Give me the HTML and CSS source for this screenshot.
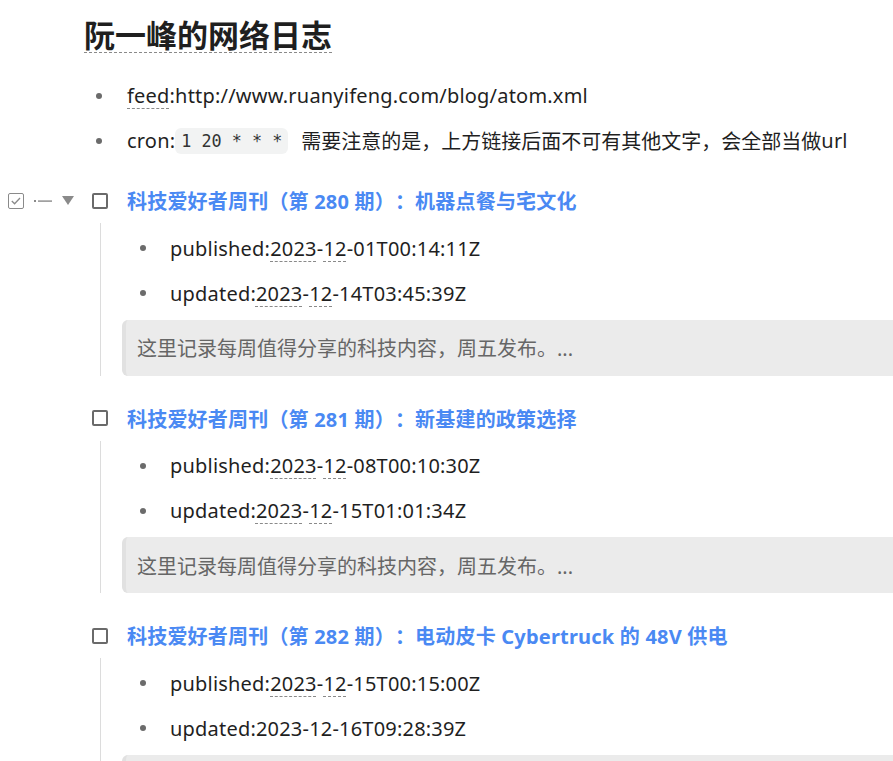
FILE: index.html
```html
<!DOCTYPE html>
<html lang="zh">
<head>
<meta charset="utf-8">
<title>阮一峰的网络日志</title>
<link rel="stylesheet" href="styles.css">
</head>
<body>
<div class="page">
  <h1 class="title"><span class="title-text">阮一峰的网络日志</span></h1>
  <ul class="list root">
    <li class="item"><span class="u">feed</span>:http://www.ruanyifeng.com/blog/atom.xml</li>
    <li class="item">cron:<code class="code">1 20 * * *</code><span class="zh">需要注意的是，上方链接后面不可有其他文字，会全部当做</span>url</li>
  </ul>

  <section class="entry">
    <div class="entry-head">
      <div class="gutter show">
        <svg class="g-check" width="16" height="16" viewBox="0 0 16 16"><rect x="0.5" y="0.5" width="15" height="15" rx="1.5" fill="none" stroke="#8a8a8a"/><path d="M3.8 8 L6.6 10.8 L12 5" fill="none" stroke="#8a8a8a" stroke-width="1.3"/></svg>
        <svg class="g-dash" width="18" height="6" viewBox="0 0 18 6"><rect x="0" y="2" width="2" height="2" fill="#8a8a8a"/><rect x="4" y="2.4" width="14" height="1.4" fill="#8a8a8a"/></svg>
        <svg class="g-tri" width="12" height="9" viewBox="0 0 12 9"><path d="M0 0 H12 L6 9 Z" fill="#8a8a8a"/></svg>
      </div>
      <span class="checkbox"></span>
      <a class="entry-title">科技爱好者周刊（第 280 期）：机器点餐与宅文化</a>
    </div>
    <div class="entry-body">
      <ul class="list sub">
        <li class="item">published:<span class="u">2023</span>-<span class="u">12</span>-01T00:14:11Z</li>
        <li class="item">updated:<span class="u">2023</span>-<span class="u">12</span>-14T03:45:39Z</li>
      </ul>
      <blockquote class="quote">这里记录每周值得分享的科技内容，周五发布。...</blockquote>
    </div>
  </section>

  <section class="entry">
    <div class="entry-head">
      <div class="gutter"></div>
      <span class="checkbox"></span>
      <a class="entry-title">科技爱好者周刊（第 281 期）：新基建的政策选择</a>
    </div>
    <div class="entry-body">
      <ul class="list sub">
        <li class="item">published:<span class="u">2023</span>-<span class="u">12</span>-08T00:10:30Z</li>
        <li class="item">updated:<span class="u">2023</span>-<span class="u">12</span>-15T01:01:34Z</li>
      </ul>
      <blockquote class="quote">这里记录每周值得分享的科技内容，周五发布。...</blockquote>
    </div>
  </section>

  <section class="entry">
    <div class="entry-head">
      <div class="gutter"></div>
      <span class="checkbox"></span>
      <a class="entry-title">科技爱好者周刊（第 282 期）：电动皮卡 Cybertruck 的 48V 供电</a>
    </div>
    <div class="entry-body">
      <ul class="list sub">
        <li class="item">published:<span class="u">2023</span>-<span class="u">12</span>-15T00:15:00Z</li>
        <li class="item">updated:2023-12-16T09:28:39Z</li>
      </ul>
      <blockquote class="quote">这里记录每周值得分享的科技内容，周五发布。...</blockquote>
    </div>
  </section>
</div>
</body>
</html>
```

FILE: styles.css
```css
html, body {
  margin: 0;
  padding: 0;
  background: #ffffff;
  overflow: hidden;
}
body {
  font-family: "Noto Sans", "Noto Sans CJK SC", sans-serif;
  font-size: 20px;
  color: #1f1f1f;
  text-spacing-trim: space-all;
}
.page {
  width: 920px;
}
.title {
  margin: 0;
  padding: 15px 0 0 84px;
  font-family: "Noto Sans CJK SC", sans-serif;
  font-size: 31px;
  font-weight: 700;
  line-height: 37px;
  height: 38px;
}
.title-text {
  display: inline-block;
  border-bottom: 1px dashed #8a8a8a;
  color: #1f1f1f;
}
.list {
  list-style: none;
  margin: 0;
  padding: 0;
}
.item {
  display: flex;
  align-items: center;
  height: 45px;
  white-space: nowrap;
  letter-spacing: 0.2px;
}
.item::before {
  content: "";
  flex: none;
  width: 6px;
  height: 6px;
  border-radius: 50%;
  background: #6b6b6b;
}
.zh {
  letter-spacing: 0;
}
.root {
  margin-top: 20px;
  padding-left: 96px;
}
.root .item::before {
  margin-right: 25px;
}
.sub {
  padding-left: 39px;
}
.sub .item::before {
  margin-right: 24px;
}
.u {
  text-decoration: underline dashed #8a8a8a;
  text-decoration-thickness: 1px;
  text-underline-offset: 5px;
}
.code {
  font-family: "DejaVu Sans Mono", monospace;
  font-size: 16.8px;
  letter-spacing: 0;
  background: #f2f3f3;
  border-radius: 6px;
  padding: 3px 6px;
  color: #333;
  margin: 0 13px 0 0;
}
.entry {
  margin-top: 15px;
}
.entry + .entry {
  margin-top: 20px;
}
.entry-head {
  display: flex;
  align-items: center;
  height: 45px;
}
.gutter {
  display: flex;
  align-items: center;
  width: 84px;
  padding-left: 8px;
  box-sizing: border-box;
  visibility: hidden;
}
.gutter.show {
  visibility: visible;
}
.g-dash {
  margin-left: 10px;
}
.g-tri {
  margin-left: 10px;
}
.checkbox {
  flex: none;
  width: 16px;
  height: 16px;
  box-sizing: border-box;
  border: 2px solid #6a6a6a;
  border-radius: 2px;
  margin-left: 8px;
}
.entry-title {
  margin-left: 19px;
  color: #4a89f3;
  font-weight: 700;
  white-space: nowrap;
  text-decoration: none;
  letter-spacing: 0.2px;
}
.entry-body {
  margin-left: 100px;
  border-left: 1px solid #dcdcdc;
  padding-top: 2.5px;
}
.quote {
  margin: 4px -40px 0 21px;
  height: 56px;
  box-sizing: border-box;
  display: flex;
  align-items: center;
  padding-left: 11px;
  background: #ebebeb;
  border-left: 4px solid #e1e1e1;
  border-radius: 6px;
  color: #666666;
  white-space: nowrap;
}
```
